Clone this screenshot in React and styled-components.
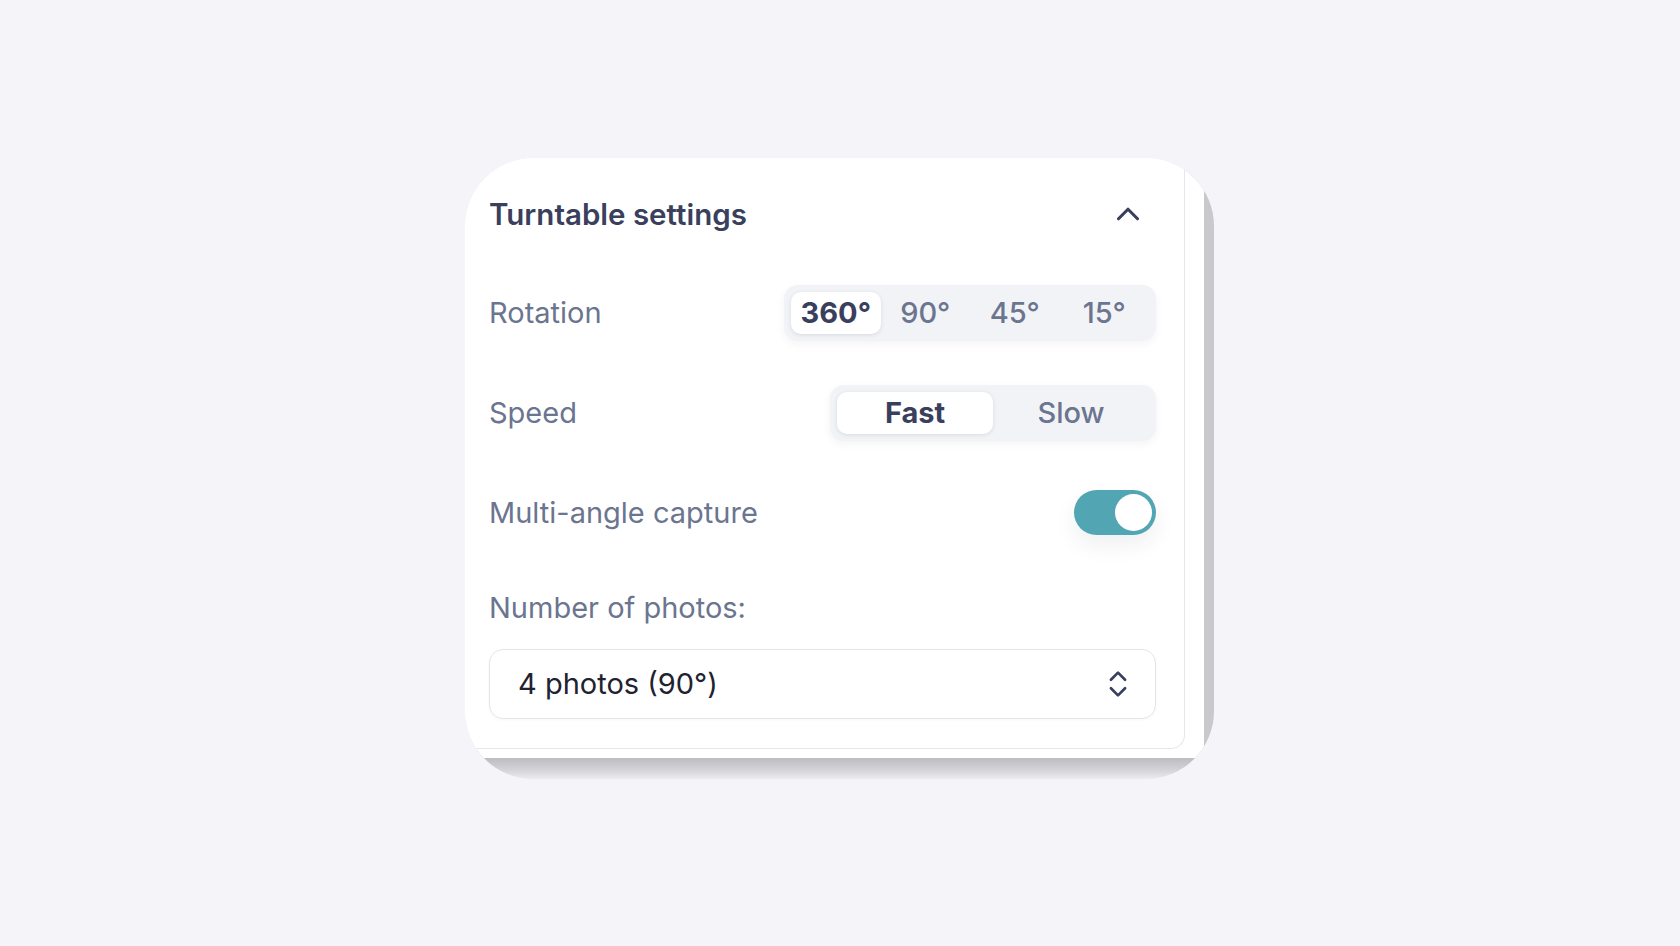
import React from 'react';
import styled, { createGlobalStyle } from 'styled-components';
import { ChevronUp, ChevronsUpDown } from 'lucide-react';

const GlobalStyle = createGlobalStyle`
  html, body {
    margin: 0;
    padding: 0;
    background: #f5f5f9;
    font-family: Inter, "Noto Sans", sans-serif;
  }
`;

const Page = styled.div`
  min-height: 100vh;
  display: flex;
  align-items: center;
  justify-content: center;
  padding: 0 1px 10px 0;
  box-sizing: border-box;
`;

// Rounded frame with the grey drop shade showing on the right and bottom
const Frame = styled.div`
  width: 749px;
  height: 621px;
  border-radius: 68px;
  overflow: hidden;
  background: linear-gradient(
    to bottom,
    #c9c9cd calc(100% - 21px),
    #bdbdc1 calc(100% - 21px),
    #d6d6da calc(100% - 8px),
    #ececf0 100%
  );
  display: flex;
  align-items: flex-start;
`;

const Sheet = styled.div`
  width: 739px;
  background: #ffffff;
  padding: 0 19px 9px 0;
  box-sizing: border-box;
`;

const Card = styled.div`
  background: #ffffff;
  border-right: 1px solid #e4e7ee;
  border-bottom: 1px solid #e4e7ee;
  border-bottom-right-radius: 14px;
  padding: 40px 28px 29px 24px;
  display: flex;
  flex-direction: column;
`;

const Header = styled.div`
  height: 32px;
  display: flex;
  align-items: center;
  justify-content: space-between;
  color: #393f5c;
`;

const Title = styled.h2`
  margin: 0;
  font-size: 29.5px;
  font-weight: 600;
  line-height: 32px;
  color: #393f5c;
`;

const Row = styled.div`
  height: 56px;
  margin-top: ${p => p.$gap}px;
  display: flex;
  align-items: center;
  justify-content: space-between;
`;

const Label = styled.span`
  font-size: 29px;
  line-height: 32px;
  color: #6b7590;
`;

const FieldLabel = styled(Label)`
  display: block;
  margin-top: 51px;
`;

const Segmented = styled.div`
  display: grid;
  grid-template-columns: repeat(${p => p.$count}, ${p => p.$item}px);
  padding: 7px;
  background: #f2f3f6;
  border-radius: 14px;
  box-shadow: 0 3px 8px rgba(30, 40, 70, 0.05);
`;

const Segment = styled.button`
  height: 42px;
  border: none;
  border-radius: 10px;
  font-family: inherit;
  font-size: 29px;
  line-height: 42px;
  padding: 0;
  cursor: pointer;
  background: ${p => (p.$active ? '#ffffff' : 'transparent')};
  color: ${p => (p.$active ? '#393f5c' : '#6b7590')};
  font-weight: ${p => (p.$active ? 700 : 500)};
  box-shadow: ${p => (p.$active ? '0 1px 4px rgba(30, 40, 70, 0.12)' : 'none')};
`;

const Toggle = styled.button`
  width: 82px;
  height: 45px;
  border: none;
  border-radius: 23px;
  background: #52a6b4;
  padding: 0 4px;
  display: flex;
  align-items: center;
  justify-content: ${p => (p.$on ? 'flex-end' : 'flex-start')};
  box-shadow: 0 10px 22px rgba(30, 40, 70, 0.07);
  cursor: pointer;
`;

const Knob = styled.span`
  width: 37px;
  height: 37px;
  border-radius: 50%;
  background: #ffffff;
`;

const Select = styled.div`
  margin-top: 25px;
  height: 70px;
  box-sizing: border-box;
  border: 1.5px solid #e2e5ec;
  border-radius: 14px;
  padding: 0 20px 0 28px;
  display: flex;
  align-items: center;
  justify-content: space-between;
  font-size: 29px;
  color: #1f2231;
  box-shadow: 0 1px 3px rgba(30, 40, 70, 0.04);
`;

const rotations = ['360°', '90°', '45°', '15°'];
const speeds = ['Fast', 'Slow'];

export default function App() {
  const [rotation, setRotation] = React.useState('360°');
  const [speed, setSpeed] = React.useState('Fast');
  const [multi, setMulti] = React.useState(true);

  return (
    <>
      <GlobalStyle />
      <Page>
        <Frame>
          <Sheet>
            <Card>
              <Header>
                <Title>Turntable settings</Title>
                <ChevronUp size={38} strokeWidth={2} style={{ marginRight: 9 }} />
              </Header>

              <Row $gap={55}>
                <Label>Rotation</Label>
                <Segmented $count={4} $item={89.5}>
                  {rotations.map(r => (
                    <Segment key={r} $active={r === rotation} onClick={() => setRotation(r)}>
                      {r}
                    </Segment>
                  ))}
                </Segmented>
              </Row>

              <Row $gap={44}>
                <Label>Speed</Label>
                <Segmented $count={2} $item={156}>
                  {speeds.map(s => (
                    <Segment key={s} $active={s === speed} onClick={() => setSpeed(s)}>
                      {s}
                    </Segment>
                  ))}
                </Segmented>
              </Row>

              <Row $gap={44}>
                <Label>Multi-angle capture</Label>
                <Toggle $on={multi} onClick={() => setMulti(!multi)}>
                  <Knob />
                </Toggle>
              </Row>

              <FieldLabel>Number of photos:</FieldLabel>
              <Select>
                <span>4 photos (90°)</span>
                <ChevronsUpDown size={34} strokeWidth={1.9} color="#393f5c" />
              </Select>
            </Card>
          </Sheet>
        </Frame>
      </Page>
    </>
  );
}
